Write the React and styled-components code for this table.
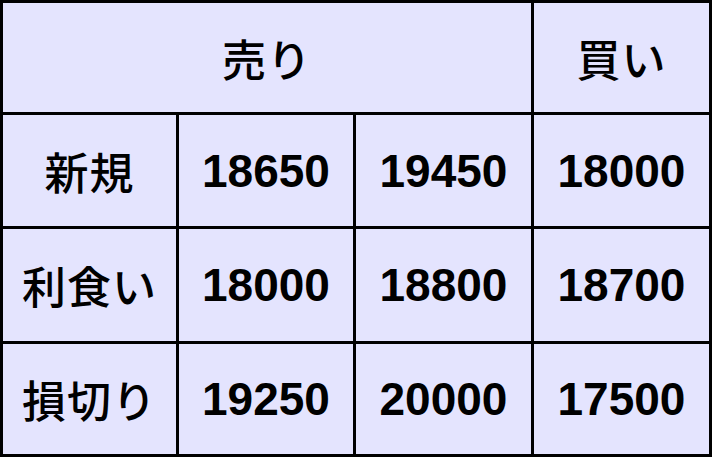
import React from 'react';
import styled, { createGlobalStyle } from 'styled-components';

const GlobalStyle = createGlobalStyle`
  html, body {
    margin: 0;
    padding: 0;
    background: #e4e4fe;
  }
`;

const Table = styled.div`
  display: grid;
  grid-template-columns: 173px 174px 175px 175px;
  grid-template-rows: 109px 111px 112px 110px;
  gap: 3px;
  padding: 3px;
  width: 712px;
  height: 457px;
  box-sizing: border-box;
  background: #000;
`;

const Cell = styled.div`
  display: flex;
  align-items: center;
  justify-content: center;
  background: #e4e4fe;
  color: #000;
  grid-column: ${(p) => p.$span ? `span ${p.$span}` : 'auto'};
  font-family: ${(p) => p.$num
    ? '"Liberation Sans", Arial, sans-serif'
    : '"Noto Sans CJK JP", "Noto Sans", sans-serif'};
  font-weight: ${(p) => p.$num ? 700 : 500};
  font-size: ${(p) => p.$num ? '46px' : '44px'};
  letter-spacing: ${(p) => p.$num ? '0' : '1px'};
  line-height: 1;
`;

const rows = [
  { label: '新規', values: ['18650', '19450', '18000'] },
  { label: '利食い', values: ['18000', '18800', '18700'] },
  { label: '損切り', values: ['19250', '20000', '17500'] },
];

export default function App() {
  return (
    <>
      <GlobalStyle />
      <Table>
        <Cell $span={3}>売り</Cell>
        <Cell>買い</Cell>
        {rows.map((row) => (
          <React.Fragment key={row.label}>
            <Cell>{row.label}</Cell>
            {row.values.map((v, i) => (
              <Cell key={i} $num>{v}</Cell>
            ))}
          </React.Fragment>
        ))}
      </Table>
    </>
  );
}
